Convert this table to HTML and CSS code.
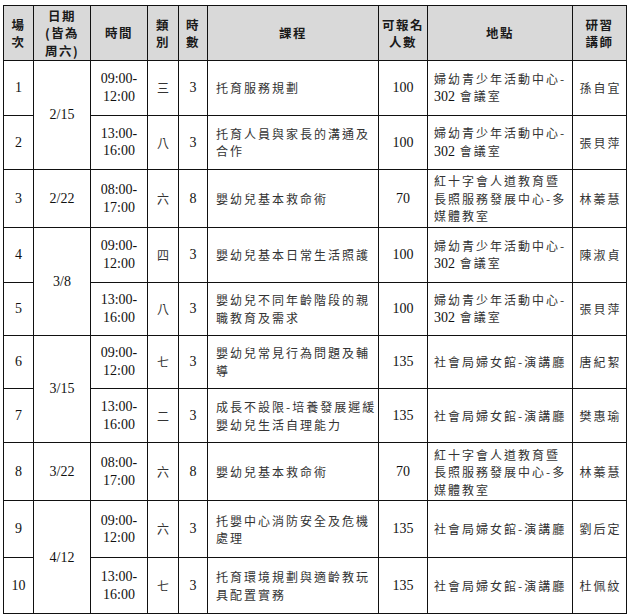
FILE: index.html
```html
<!DOCTYPE html>
<html lang="zh-Hant">
<head>
<meta charset="utf-8">
<title>課程表</title>
<link rel="stylesheet" href="styles.css">
</head>
<body>
<table class="sched">
  <colgroup>
    <col class="c-no"><col class="c-date"><col class="c-time"><col class="c-cat"><col class="c-hr">
    <col class="c-course"><col class="c-cap"><col class="c-loc"><col class="c-tch">
  </colgroup>
  <thead>
    <tr>
      <th>場<br>次</th>
      <th>日期<br>(皆為<br>周六)</th>
      <th>時間</th>
      <th>類<br>別</th>
      <th>時<br>數</th>
      <th>課程</th>
      <th>可報名<br>人數</th>
      <th>地點</th>
      <th>研習<br>講師</th>
    </tr>
  </thead>
  <tbody>
    <tr>
      <td class="num">1</td>
      <td class="num" rowspan="2">2/15</td>
      <td class="num">09:00-<br>12:00</td>
      <td class="cjk ctr">三</td>
      <td class="num">3</td>
      <td class="cjk course">托育服務規劃</td>
      <td class="num">100</td>
      <td class="cjk loc">婦幼青少年活動中心-<br><span class="n">302</span> 會議室</td>
      <td class="cjk ctr">孫自宜</td>
    </tr>
    <tr>
      <td class="num">2</td>
      <td class="num">13:00-<br>16:00</td>
      <td class="cjk ctr">八</td>
      <td class="num">3</td>
      <td class="cjk course">托育人員與家長的溝通及<br>合作</td>
      <td class="num">100</td>
      <td class="cjk loc">婦幼青少年活動中心-<br><span class="n">302</span> 會議室</td>
      <td class="cjk ctr">張貝萍</td>
    </tr>
    <tr class="tall">
      <td class="num">3</td>
      <td class="num">2/22</td>
      <td class="num">08:00-<br>17:00</td>
      <td class="cjk ctr">六</td>
      <td class="num">8</td>
      <td class="cjk course">嬰幼兒基本救命術</td>
      <td class="num">70</td>
      <td class="cjk loc">紅十字會人道教育暨<br>長照服務發展中心-多<br>媒體教室</td>
      <td class="cjk ctr">林蓁慧</td>
    </tr>
    <tr>
      <td class="num">4</td>
      <td class="num" rowspan="2">3/8</td>
      <td class="num">09:00-<br>12:00</td>
      <td class="cjk ctr">四</td>
      <td class="num">3</td>
      <td class="cjk course">嬰幼兒基本日常生活照護</td>
      <td class="num">100</td>
      <td class="cjk loc">婦幼青少年活動中心-<br><span class="n">302</span> 會議室</td>
      <td class="cjk ctr">陳淑貞</td>
    </tr>
    <tr class="short">
      <td class="num">5</td>
      <td class="num">13:00-<br>16:00</td>
      <td class="cjk ctr">八</td>
      <td class="num">3</td>
      <td class="cjk course">嬰幼兒不同年齡階段的親<br>職教育及需求</td>
      <td class="num">100</td>
      <td class="cjk loc">婦幼青少年活動中心-<br><span class="n">302</span> 會議室</td>
      <td class="cjk ctr">張貝萍</td>
    </tr>
    <tr class="short">
      <td class="num">6</td>
      <td class="num" rowspan="2">3/15</td>
      <td class="num">09:00-<br>12:00</td>
      <td class="cjk ctr">七</td>
      <td class="num">3</td>
      <td class="cjk course">嬰幼兒常見行為問題及輔<br>導</td>
      <td class="num">135</td>
      <td class="cjk loc">社會局婦女館-演講廳</td>
      <td class="cjk ctr">唐紀絜</td>
    </tr>
    <tr>
      <td class="num">7</td>
      <td class="num">13:00-<br>16:00</td>
      <td class="cjk ctr">二</td>
      <td class="num">3</td>
      <td class="cjk course">成長不設限-培養發展遲緩<br>嬰幼兒生活自理能力</td>
      <td class="num">135</td>
      <td class="cjk loc">社會局婦女館-演講廳</td>
      <td class="cjk ctr">樊惠瑜</td>
    </tr>
    <tr class="tall">
      <td class="num">8</td>
      <td class="num">3/22</td>
      <td class="num">08:00-<br>17:00</td>
      <td class="cjk ctr">六</td>
      <td class="num">8</td>
      <td class="cjk course">嬰幼兒基本救命術</td>
      <td class="num">70</td>
      <td class="cjk loc">紅十字會人道教育暨<br>長照服務發展中心-多<br>媒體教室</td>
      <td class="cjk ctr">林蓁慧</td>
    </tr>
    <tr class="long">
      <td class="num">9</td>
      <td class="num" rowspan="2">4/12</td>
      <td class="num">09:00-<br>12:00</td>
      <td class="cjk ctr">六</td>
      <td class="num">3</td>
      <td class="cjk course">托嬰中心消防安全及危機<br>處理</td>
      <td class="num">135</td>
      <td class="cjk loc">社會局婦女館-演講廳</td>
      <td class="cjk ctr">劉后定</td>
    </tr>
    <tr class="long">
      <td class="num">10</td>
      <td class="num">13:00-<br>16:00</td>
      <td class="cjk ctr">七</td>
      <td class="num">3</td>
      <td class="cjk course">托育環境規劃與適齡教玩<br>具配置實務</td>
      <td class="num">135</td>
      <td class="cjk loc">社會局婦女館-演講廳</td>
      <td class="cjk ctr">杜佩紋</td>
    </tr>
  </tbody>
</table>
</body>
</html>
```
FILE: styles.css
```css
html, body {
  margin: 0;
  padding: 0;
  background: #fff;
}
body {
  padding: 5px 0 0 3px;
}
.sched {
  border-collapse: collapse;
  table-layout: fixed;
  width: 624px;
  font-family: "Liberation Serif", "Noto Sans CJK TC", serif;
  color: #111;
}
.c-no { width: 30px; }
.c-date { width: 57px; }
.c-time { width: 57px; }
.c-cat { width: 31px; }
.c-hr { width: 29px; }
.c-course { width: 171px; }
.c-cap { width: 49px; }
.c-loc { width: 145px; }
.c-tch { width: 54px; }

.sched th,
.sched td {
  border: 1px solid #111;
  padding: 0;
  vertical-align: middle;
  text-align: center;
}
.sched thead tr {
  height: 55px;
}
.sched th {
  background: #d9d9d9;
  font-family: "Noto Sans CJK TC", sans-serif;
  font-weight: 700;
  font-size: 12.5px;
  line-height: 17.5px;
  letter-spacing: 1.5px;
  color: #1a1a1a;
}
.sched tbody tr {
  height: 54.6px;
}
.sched tbody tr.tall {
  height: 58px;
}
.sched tbody tr.short {
  height: 53px;
}
.sched tbody tr.long {
  height: 56.5px;
}
.sched .num {
  font-size: 14px;
  line-height: 17.5px;
}
.sched .cjk {
  font-family: "Noto Sans CJK TC", sans-serif;
  font-size: 12px;
  line-height: 17.5px;
  letter-spacing: 2px;
  color: #333;
}
.sched .cjk .n {
  font-family: "Liberation Serif", serif;
  font-size: 14px;
  letter-spacing: 0;
  color: #111;
}
.sched td.course {
  text-align: left;
  padding-left: 8px;
}
.sched td.loc {
  text-align: left;
  padding-left: 6px;
}
.sched td.ctr {
  text-align: center;
  padding-left: 2px;
}
```
